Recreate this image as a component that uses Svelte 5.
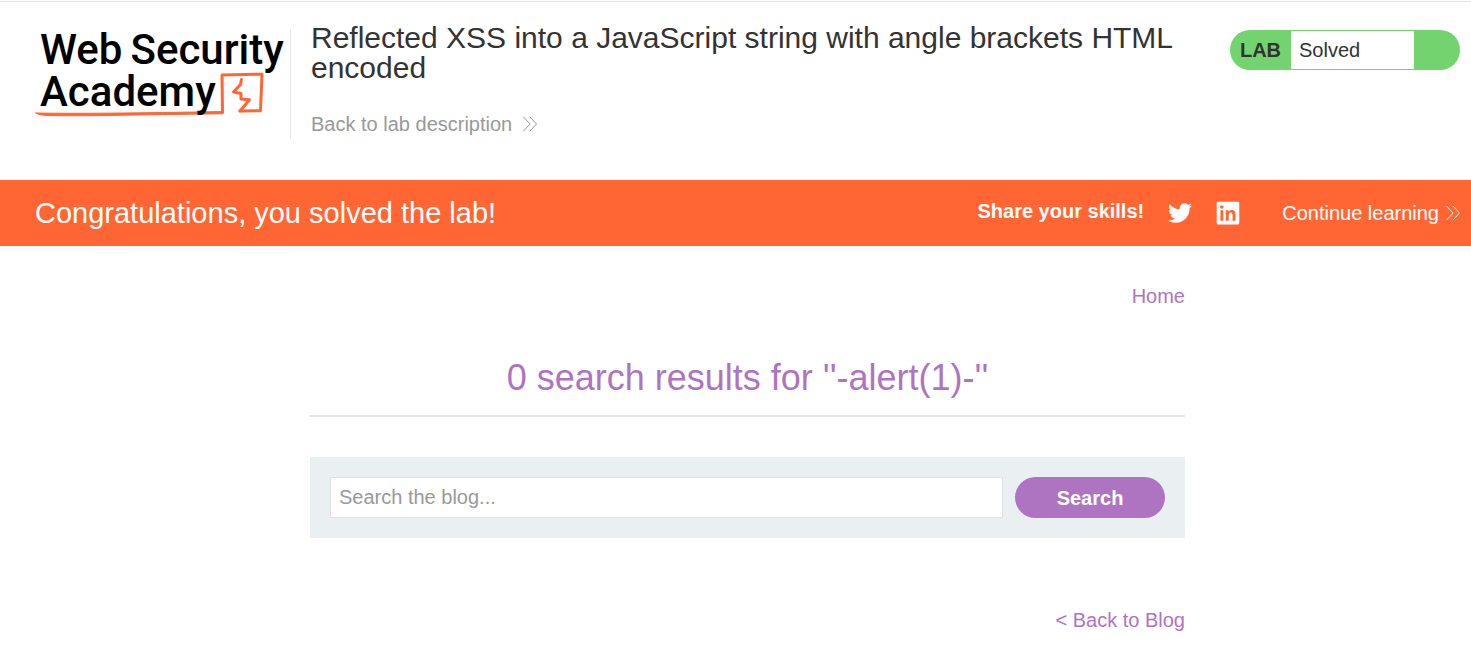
<script>
  let term = $state('');
</script>

{#snippet chevrons()}
  <svg class="chevrons" viewBox="0 0 16 16" width="16" height="16" aria-hidden="true">
    <path d="M1.5 1 8 8l-6.5 7M8 1l6.5 7L8 15" />
  </svg>
{/snippet}

<header>
  <a class="logo" href="#academy" aria-label="Web Security Academy">
    <svg viewBox="0 0 260 100" width="260" height="100" aria-hidden="true">
      <path d="M188.500 88.500 188 51 228 50.200 226.500 86.700 206 87" />
      <path d="M207.500 55.500 206.500 60.500 199.500 68 207 69.500V75L215.500 75.700 209 83.500 206 87" />
      <path class="brush" d="M2 89Q60 90 188.500 87.500Q190 88.500 188.500 89.800Q130 90.500 90 91.200 40 92.200 14 91.500 4 91 2 89Z" />
    </svg>
    <span class="line"><span>Web</span><span>Security</span></span>
    <span class="line">Academy</span>
  </a>
  <div class="title">
    <h1>Reflected XSS into a JavaScript string with angle brackets HTML encoded</h1>
    <a href="#description">Back to lab description {@render chevrons()}</a>
  </div>
  <div class="status"><strong>LAB</strong><span>Solved</span></div>
</header>

<section class="banner">
  <h2>Congratulations, you solved the lab!</h2>
  <div class="share">
    <strong>Share your skills!</strong>
    <a href="#twitter" aria-label="Twitter">
      <svg viewBox="0 0 24 24" width="24" height="24"><path d="M23.950 4.570a10 10 0 0 1-2.820.770 4.960 4.960 0 0 0 2.160-2.720c-.950.550-2 .950-3.130 1.180a4.920 4.920 0 0 0-8.380 4.480C7.690 8.100 4.070 6.130 1.640 3.160a4.900 4.900 0 0 0 1.520 6.570 4.900 4.900 0 0 1-2.230-.610v.060a4.920 4.920 0 0 0 3.950 4.830 5 5 0 0 1-2.210.080 4.940 4.940 0 0 0 4.600 3.420A9.870 9.870 0 0 1 0 19.540a13.990 13.990 0 0 0 7.560 2.210c9.050 0 14-7.500 14-13.980 0-.210 0-.420-.020-.630a9.940 9.940 0 0 0 2.460-2.550z" /></svg>
    </a>
    <a href="#linkedin" aria-label="LinkedIn">
      <svg viewBox="0 0 24 24" width="24" height="24"><path fill-rule="evenodd" d="M2 .8h20q1.300 0 1.300 1.300v20q0 1.300-1.300 1.300H2q-1.300 0-1.300-1.300v-20Q.7.800 2 .8ZM4.400 9.300v10.400h2.900V9.300ZM5.850 4.200a1.800 1.800 0 1 0 0 3.600 1.800 1.800 0 0 0 0-3.600ZM9.800 9.300v10.400h2.900v-5.200c0-1.600.5-2.900 2.100-2.900s1.800 1.500 1.800 3v5.100h2.900V14c0-2.800-.7-5-3.800-5-1.500 0-2.600.8-3.100 1.700V9.300Z" /></svg>
    </a>
  </div>
  <a class="continue" href="#learning">Continue learning {@render chevrons()}</a>
</section>

<main>
  <div class="container">
    <nav><a href="#home">Home</a></nav>
    <h1>0 search results for ''-alert(1)-''</h1>
    <hr />
    <form onsubmit={(e) => e.preventDefault()}>
      <input type="text" aria-label="Search the blog" placeholder="Search the blog..." bind:value={term} />
      <button type="submit">Search</button>
    </form>
    <div class="back"><a href="#blog">&lt; Back to Blog</a></div>
  </div>
</main>

<style>
  :global(body) {
    margin: 0;
    background: #fff;
    color: #333332;
    font: 20px/24px "Liberation Sans", Arial, sans-serif;
  }
  a {
    color: inherit;
    text-decoration: none;
  }
  h1, h2 {
    margin: 0;
    font-weight: 400;
  }
  header {
    display: flex;
    align-items: flex-start;
    box-sizing: border-box;
    min-height: 179px;
    margin-top: 1px;
    padding: 22px 11px 0 34px;
    border-top: 1px solid #e1e1e1;
  }
  .logo {
    position: relative;
    flex: none;
    width: 256px;
    padding-top: 5px;
    color: #000;
    font: 500 42px/42px Roboto, sans-serif;
  }
  .line {
    position: relative;
    display: flex;
    gap: 8px;
    padding-left: 6px;
  }
  .logo svg {
    position: absolute;
    top: 0;
    left: 0;
    fill: none;
    stroke: #ff6633;
    stroke-width: 3;
    stroke-linejoin: round;
    stroke-linecap: round;
  }
  .logo .brush {
    fill: #ff6633;
    stroke-width: 1;
  }
  .title {
    flex: 1;
    margin-top: 6px;
    padding: 0 40px 0 20px;
    height: 108px;
    border-left: 1px solid #e5e5e5;
  }
  .title h1 {
    margin-top: -7px;
    font-size: 30px;
    line-height: 30px;
  }
  .title a {
    display: inline-flex;
    align-items: center;
    gap: 10px;
    margin-top: 29px;
    color: #999;
  }
  .chevrons {
    fill: none;
    stroke: currentColor;
    stroke-width: 1;
  }
  .status {
    display: flex;
    flex: none;
    box-sizing: border-box;
    width: 230px;
    height: 40px;
    margin-top: 6px;
    padding: 1px 46px 1px 0;
    border-radius: 20px;
    background: #72d36f;
    line-height: 38px;
  }
  .status strong {
    width: 61px;
    text-align: center;
  }
  .status span {
    flex: 1;
    padding-left: 8px;
    background: #fff;
  }
  .banner {
    display: flex;
    align-items: center;
    min-height: 66px;
    padding: 0 10px 0 35px;
    background: #ff6633;
    color: #fff;
  }
  .banner h2 {
    flex: 1;
    font-size: 29px;
    line-height: 34px;
  }
  .share {
    display: flex;
    align-items: center;
    gap: 24px;
  }
  .share strong {
    padding-bottom: 4px;
  }
  .share svg {
    display: block;
    fill: #fff;
  }
  .continue {
    display: flex;
    align-items: center;
    gap: 6px;
    margin-left: 42px;
  }
  main {
    padding: 38px 0 24px 24px;
    color: #ae74c1;
  }
  .container {
    max-width: 875px;
    margin: 0 auto;
  }
  nav, .back {
    text-align: right;
  }
  .container h1 {
    margin-top: 48px;
    text-align: center;
    font-size: 36px;
    line-height: 44px;
  }
  hr {
    height: 2px;
    margin: 15px 0 40px;
    border: 0;
    background: #e5e5e5;
  }
  form {
    display: flex;
    gap: 12px;
    padding: 20px;
    background: #eaeff2;
  }
  input {
    flex: 1;
    min-width: 0;
    box-sizing: border-box;
    height: 41px;
    padding: 0 8px;
    border: 1px solid #e1e1e1;
    background: #fff;
    color: #333332;
    font: inherit;
  }
  input::placeholder {
    color: #999;
    opacity: 1;
  }
  button {
    width: 150px;
    height: 41px;
    border: 0;
    border-radius: 21px;
    background: #ae74c1;
    color: #fff;
    font: inherit;
    font-weight: 700;
  }
  .back {
    margin-top: 70px;
  }
</style>
